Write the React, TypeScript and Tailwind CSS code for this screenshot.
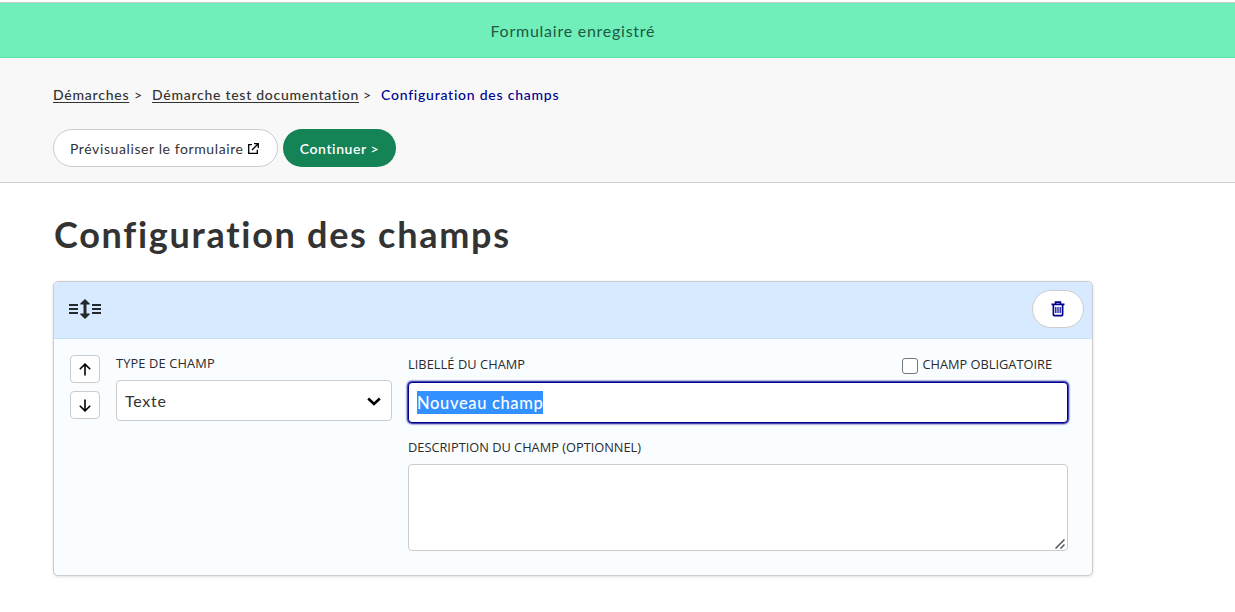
import React from "react";

const muli = "font-['Lato','Open_Sans',sans-serif]";
const label = "font-['Open_Sans','Noto_Sans',sans-serif] text-[12.8px] leading-[16px] pb-[2px] text-[#2b2b2b] whitespace-nowrap";

function ExternalIcon() {
  return (
    <svg width="11" height="11" viewBox="0 0 11 11" fill="none" stroke="#000" strokeWidth="1.3">
      <path d="M4 1.6H.7v8.7h8.6V6.8" />
      <path d="M6 .7h4.3V5M10.2.8 4 7" />
    </svg>
  );
}

function DragIcon() {
  return (
    <svg width="32" height="20" viewBox="0 0 32 20" fill="#24292e">
      <path d="M0 5h9v2H0zM0 9h9v2H0zM0 13h9v2H0zM23 5h9v2h-9zM23 9h9v2h-9zM23 13h9v2h-9z" />
      <path d="M16 0l4.700 4.500v1H17.500v9h3.200v1L16 20l-4.700-4.500v-1h3.200v-9h-3.200v-1z" />
    </svg>
  );
}

function TrashIcon() {
  return (
    <svg width="14" height="16" viewBox="0 0 14 16" fill="none" stroke="#000091" strokeWidth="1.7">
      <path d="M.5 3.4h13M4.6 3V1.1h4.8V3" />
      <path d="M2.4 3.6v10q0 1 1 1h7.200q1 0 1-1v-10" />
      <path d="M4.8 6v6M7 6v6M9.200 6v6" strokeWidth="1.200" />
    </svg>
  );
}

function ArrowIcon({ down = false }: { down?: boolean }) {
  return (
    <svg width="12" height="13" viewBox="0 0 12 13" fill="none" stroke="#000" strokeWidth="1.6" className={down ? "rotate-180" : ""}>
      <path d="M6 12.500V1.200M.8 6.200 6 1.100l5.200 5.100" />
    </svg>
  );
}

function MoveButton({ down = false }: { down?: boolean }) {
  return (
    <button className="flex h-7 w-[30px] items-center justify-center rounded-[4px] border border-[#ccc] bg-white">
      <ArrowIcon down={down} />
    </button>
  );
}

export default function App() {
  return (
    <div className={`h-[612px] w-[1235px] overflow-hidden bg-white pt-0.5 text-[#333] ${muli}`}>
      <div className="flex h-14 border-t border-b border-t-[#ccc] border-b-[#5fe3ab] bg-[#70efbb] pt-[16px] pl-[490.500px] text-[16px] leading-[24px] text-[#1c5a42]">
        <span className="whitespace-nowrap tracking-[0.75px]">Formulaire enregistré</span>
      </div>

      <header className="h-[125px] border-b border-[#ccc] bg-[#f8f8f8] pt-[27px] pl-[53px]">
        <nav className="flex h-5 text-[14px] leading-5 font-medium whitespace-nowrap">
          <a className="w-[76px] tracking-[0.76px] underline underline-offset-2">Démarches</a>
          <span className="ml-[5px] w-[18px]">&gt;</span>
          <a className="w-[206px] tracking-[0.73px] underline underline-offset-2">Démarche test documentation</a>
          <span className="ml-[5px] w-[18px]">&gt;</span>
          <span className="tracking-[0.76px] text-[#000091]">Configuration des champs</span>
        </nav>
        <div className="mt-6 flex gap-[5px]">
          <button className="flex h-[38px] w-[225px] items-center rounded-full border border-[#ccc] bg-white pl-4">
            <span className="w-[177.500px] text-left text-[14px] tracking-[0.6px] whitespace-nowrap">Prévisualiser le formulaire</span>
            <ExternalIcon />
          </button>
          <button className="h-[38px] w-[113px] rounded-full bg-[#148356] text-[14px] font-semibold tracking-[0.57px] whitespace-nowrap text-white">
            Continuer &gt;
          </button>
        </div>
      </header>

      <main className="pl-[53px]">
        <h1 className="h-[98px] pt-[27px] pl-px text-[36px] leading-[48px] font-bold tracking-[1.720px] whitespace-nowrap">
          Configuration des champs
        </h1>
        <section className="h-[295px] w-[1040px] overflow-hidden rounded-[5px] border border-[#ccc] bg-[#f9fdff] shadow-[0_1px_3px_rgba(0,0,0,0.12)]">
          <div className="flex h-[57px] items-center justify-between border-b border-[#cbe0f0] bg-[#d8eaff] pr-2 pb-[2px] pl-[15px]">
            <DragIcon />
            <button className="flex h-[38px] w-[52px] items-center justify-center rounded-full border border-[#ccc] bg-white">
              <TrashIcon />
            </button>
          </div>
          <div className="flex pt-4 pl-4">
            <div className="flex w-[30px] flex-col gap-2">
              <MoveButton />
              <MoveButton down />
            </div>
            <div className="ml-4 w-[276px]">
              <div className={`${label} tracking-[0.15px]`}>TYPE DE CHAMP</div>
              <div className="mt-[7px] flex h-[41px] items-center justify-between rounded-[4px] border border-[#ccc] bg-white pr-[10px] pl-2">
                <span className="text-[16px] tracking-[0.75px]">Texte</span>
                <svg className="mt-[2px]" width="14" height="9" viewBox="0 0 14 9" fill="none" stroke="#000" strokeWidth="2.600">
                  <path d="M1.200 1.500 7 7l5.800-5.500" />
                </svg>
              </div>
            </div>
            <div className="ml-4 w-[660px]">
              <div className="flex h-[27px] justify-between pr-4">
                <div className={`${label} pt-px tracking-[0.06px]`}>LIBELLÉ DU CHAMP</div>
                <div className="flex">
                  <span className="mt-[3px] mr-1 h-4 w-4 rounded-[3px] border border-[#767676] bg-white" />
                  <div className={`${label} pt-px`}>CHAMP OBLIGATOIRE</div>
                </div>
              </div>
              <div className="flex h-[41px] items-center rounded-[4px] border border-[#000091] bg-white pl-2 shadow-[0_0_2px_1px_#000091]">
                <span className="h-[23px] w-[126px] bg-[#3390ff] text-[16.500px] leading-[24px] font-medium tracking-[0.650px] whitespace-nowrap text-white">Nouveau champ</span>
              </div>
              <div className={`${label} mt-[16px]`}>DESCRIPTION DU CHAMP (OPTIONNEL)</div>
              <div className="mt-[7px] flex h-[87px] items-end justify-end rounded-[4px] border border-[#ccc] bg-white pr-0.5 pb-px">
                <svg width="10" height="10" viewBox="0 0 10 10" fill="none" stroke="#555" strokeWidth="1.500">
                  <path d="M.5 9.500 9.500.5M5.500 9.500l4-4" />
                </svg>
              </div>
            </div>
          </div>
        </section>
      </main>
    </div>
  );
}
